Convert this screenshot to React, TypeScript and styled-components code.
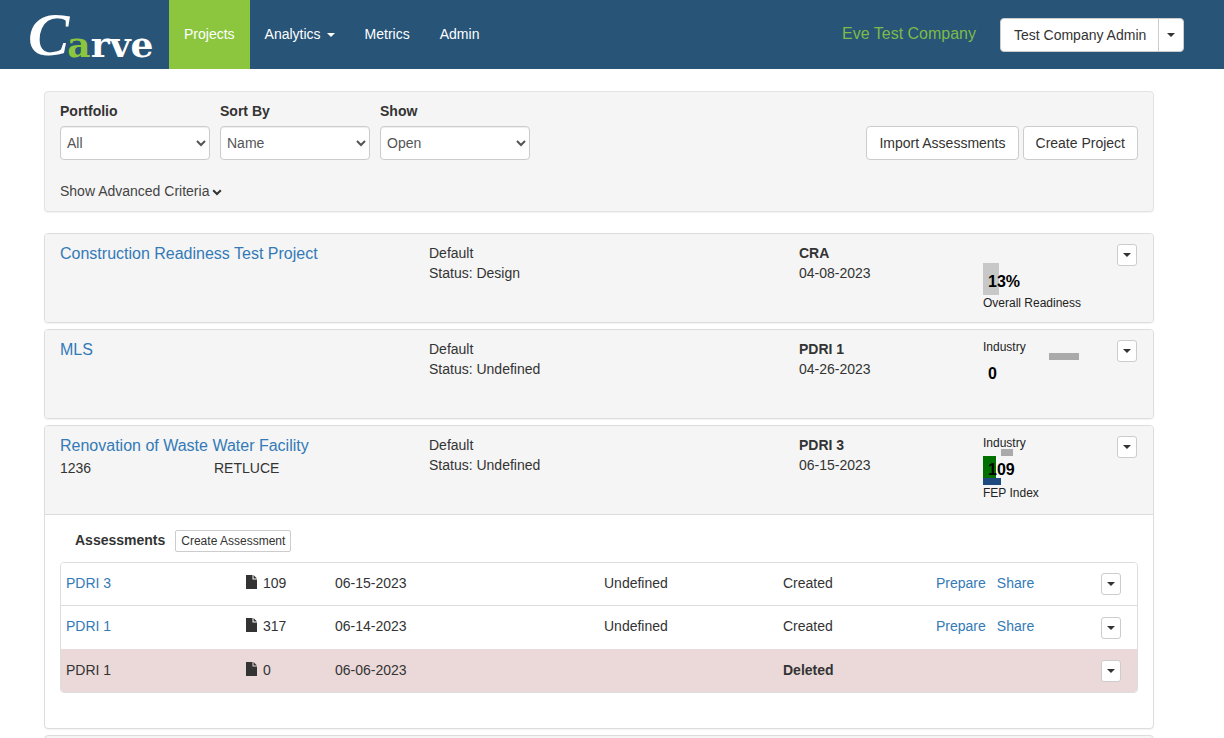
import React from 'react';
import styled, { createGlobalStyle } from 'styled-components';

const GlobalStyle = createGlobalStyle`
  html, body {
    margin: 0;
    height: 738px;
    overflow: hidden;
    background: #fff;
  }
  body {
    font-family: 'Liberation Sans', Arial, sans-serif;
    font-size: 14px;
    line-height: 20px;
    color: #333;
  }
  * {
    box-sizing: border-box;
  }
`;

const Navbar = styled.nav`
  display: flex;
  align-items: stretch;
  height: 69px;
  background: #285478;
`;

const Brand = styled.div`
  display: flex;
  align-items: flex-end;
  width: 169px;
  padding: 0 0 4px 28px;
  font-family: 'DejaVu Serif', serif;
  font-weight: bold;
  font-size: 36px;
  line-height: 42px;
  color: #fff;
`;

const BrandInitial = styled.span`
  margin-right: -2px;
  font-family: 'Liberation Serif', serif;
  font-style: italic;
  font-weight: bold;
  font-size: 62px;
  line-height: 62px;
`;

const BrandAccent = styled.span`
  color: #8cc63f;
`;

const NavLink = styled.a<{ $active?: boolean }>`
  display: flex;
  align-items: center;
  gap: 6px;
  height: 69px;
  padding: 0 15px 2px;
  color: #fff;
  background: ${(props: { $active?: boolean }) => (props.$active ? '#8cc63f' : 'transparent')};
`;

const NavCaret = styled.span`
  width: 0;
  height: 0;
  margin-top: 2px;
  border-top: 4px solid #fff;
  border-left: 4px solid transparent;
  border-right: 4px solid transparent;
`;

const NavRight = styled.div`
  display: flex;
  align-items: center;
  margin-left: auto;
  padding-right: 40px;
`;

const CompanyName = styled.span`
  margin-right: 24px;
  padding-bottom: 1px;
  font-size: 16px;
  color: #7dbb48;
`;

const UserGroup = styled.div`
  display: flex;
  height: 34px;
  background: #fff;
  border: 1px solid #ccc;
  border-radius: 4px;
`;

const UserName = styled.span`
  display: flex;
  align-items: center;
  width: 158px;
  padding-left: 13px;
  border-right: 1px solid #ccc;
`;

const UserCaret = styled.span`
  display: flex;
  align-items: center;
  justify-content: center;
  width: 24px;
`;

const Caret = styled.span`
  display: block;
  width: 0;
  height: 0;
  border-top: 4px solid #333;
  border-left: 4px solid transparent;
  border-right: 4px solid transparent;
`;

const Content = styled.main`
  width: 1110px;
  margin-left: 44px;
  padding-top: 22px;
`;

const FilterPanel = styled.section`
  display: flex;
  justify-content: space-between;
  height: 121px;
  margin-bottom: 21px;
  padding: 9px 15px;
  background: #f5f5f5;
  border: 1px solid #e3e3e3;
  border-radius: 4px;
  box-shadow: 0 1px 1px rgba(0, 0, 0, 0.05);
`;

const FilterFields = styled.div`
  display: flex;
  flex-direction: column;
`;

const FilterRow = styled.div`
  display: flex;
  gap: 10px;
`;

const Field = styled.label`
  display: flex;
  flex-direction: column;
  gap: 5px;
  width: 150px;
  font-weight: bold;
`;

const Select = styled.select`
  height: 34px;
  padding: 6px 2px;
  font-family: inherit;
  font-size: 14px;
  color: #555;
  background: #fff;
  border: 1px solid #ccc;
  border-radius: 4px;
  box-shadow: inset 0 1px 1px rgba(0, 0, 0, 0.075);
`;

const AdvancedToggle = styled.a`
  display: flex;
  align-items: center;
  gap: 3px;
  margin-top: 21px;
  color: #444;
`;

const FilterActions = styled.div`
  display: flex;
  gap: 4px;
  padding-top: 25px;
`;

const Button = styled.button`
  height: 34px;
  padding: 0 12px;
  font-family: inherit;
  font-size: 14px;
  color: #333;
  background: #fff;
  border: 1px solid #ccc;
  border-radius: 4px;
`;

const ProjectPanel = styled.section`
  margin-bottom: 6px;
  background: #fff;
  border: 1px solid #ddd;
  border-radius: 4px;
  box-shadow: 0 1px 1px rgba(0, 0, 0, 0.05);
  overflow: hidden;
`;

const ProjectHeader = styled.header`
  display: grid;
  grid-template-columns: 369px 370px 184px 134px 1fr;
  height: 88px;
  padding: 9px 16px 0 15px;
  background: #f5f5f5;
`;

const ProjectTitle = styled.a`
  display: block;
  margin-top: 1px;
  font-size: 16px;
  color: #337ab7;
`;

const ProjectMeta = styled.div`
  display: flex;
  margin-top: 2px;
`;

const ProjectCode = styled.span`
  width: 154px;
`;

const TypeName = styled.div`
  font-weight: bold;
`;

const MetricBox = styled.div`
  position: relative;
  height: 70px;
  margin-top: 1px;
  font-size: 12px;
  color: #222;
`;

const MetricBar = styled.span<{ $x: number; $y: number; $w: number; $h: number; $color: string }>`
  position: absolute;
  left: ${(p: { $x: number }) => p.$x}px;
  top: ${(p: { $y: number }) => p.$y}px;
  width: ${(p: { $w: number }) => p.$w}px;
  height: ${(p: { $h: number }) => p.$h}px;
  background: ${(p: { $color: string }) => p.$color};
`;

const MetricValue = styled.span<{ $y: number }>`
  position: absolute;
  left: 5px;
  top: ${(p: { $y: number }) => p.$y}px;
  font-size: 16px;
  font-weight: bold;
  color: #000;
`;

const MetricLabel = styled.span<{ $y: number }>`
  position: absolute;
  left: 0;
  top: ${(p: { $y: number }) => p.$y}px;
  white-space: nowrap;
`;

const SmallCaretButton = styled.button`
  display: flex;
  align-items: center;
  justify-content: center;
  width: 20px;
  height: 22px;
  margin-top: 1px;
  padding: 0;
  background: #fff;
  border: 1px solid #ccc;
  border-radius: 3px;
`;

const RowCaretButton = styled(SmallCaretButton)`
  margin-top: 2px;
`;

const AssessmentsBody = styled.div`
  height: 214px;
  padding: 15px 15px 0;
  border-top: 1px solid #ddd;
`;

const AssessmentsTitleRow = styled.div`
  display: flex;
  align-items: center;
  gap: 10px;
  height: 22px;
  margin-bottom: 10px;
  padding-left: 15px;
`;

const AssessmentsTitle = styled.strong`
  padding-bottom: 2px;
`;

const SmallButton = styled.button`
  height: 22px;
  padding: 0 5px;
  font-family: inherit;
  font-size: 12px;
  color: #333;
  background: #fff;
  border: 1px solid #ccc;
  border-radius: 2px;
`;

const AssessmentList = styled.div`
  border: 1px solid #ddd;
  border-radius: 4px;
  overflow: hidden;
`;

const AssessmentRow = styled.div<{ $deleted?: boolean }>`
  display: grid;
  grid-template-columns: 180px 89px 269px 179px 153px 165px 1fr;
  align-items: center;
  height: 43px;
  padding: 0 16px 2px 5px;
  background: ${(p: { $deleted?: boolean }) => (p.$deleted ? '#ebd9d9' : '#fff')};
  border-top: 1px solid ${(p: { $deleted?: boolean }) => (p.$deleted ? '#ebd9d9' : '#ddd')};

  &:first-child {
    border-top: 0;
    height: 42px;
  }

  &:nth-child(2) {
    height: 44px;
    padding-bottom: 4px;
  }

  &:nth-child(2) button {
    margin-top: 4px;
  }
`;

const RowLink = styled.a`
  color: #337ab7;
`;

const Score = styled.span`
  display: flex;
  align-items: center;
  gap: 6px;
`;

const RowActions = styled.span`
  display: flex;
  gap: 11px;
`;

const NextPanelEdge = styled.div`
  height: 20px;
  background: #f5f5f5;
  border: 1px solid #ddd;
  border-radius: 4px;
`;

const FileIcon = () => (
  <svg width="11" height="14" viewBox="0 0 11 14" style={{ marginTop: -2 }}>
    <path d="M0 0H6.5V4.5H11V14H0Z M7.5 0L11 3.5H7.5Z" fill="#333" />
  </svg>
);

const Chevron = () => (
  <svg width="10" height="7" viewBox="0 0 10 7" style={{ marginTop: 2 }}>
    <path d="M1.2 1.2L5 5L8.8 1.2" fill="none" stroke="#333" strokeWidth="2" />
  </svg>
);

const assessments = [
  { name: 'PDRI 3', score: 109, date: '06-15-2023', status: 'Undefined', state: 'Created' },
  { name: 'PDRI 1', score: 317, date: '06-14-2023', status: 'Undefined', state: 'Created' },
  { name: 'PDRI 1', score: 0, date: '06-06-2023', status: '', state: 'Deleted', deleted: true },
];

const App: React.FC = () => {
  return (
    <>
      <GlobalStyle />
      <Navbar>
        <Brand>
          <BrandInitial>C</BrandInitial>
          <BrandAccent>a</BrandAccent>rve
        </Brand>
        <NavLink $active>Projects</NavLink>
        <NavLink>
          Analytics <NavCaret />
        </NavLink>
        <NavLink>Metrics</NavLink>
        <NavLink>Admin</NavLink>
        <NavRight>
          <CompanyName>Eve Test Company</CompanyName>
          <UserGroup>
            <UserName>Test Company Admin</UserName>
            <UserCaret>
              <Caret />
            </UserCaret>
          </UserGroup>
        </NavRight>
      </Navbar>

      <Content>
        {/* Filters */}
        <FilterPanel>
          <FilterFields>
            <FilterRow>
              <Field>
                Portfolio
                <Select defaultValue="All">
                  <option>All</option>
                </Select>
              </Field>
              <Field>
                Sort By
                <Select defaultValue="Name">
                  <option>Name</option>
                </Select>
              </Field>
              <Field>
                Show
                <Select defaultValue="Open">
                  <option>Open</option>
                </Select>
              </Field>
            </FilterRow>
            <AdvancedToggle>
              Show Advanced Criteria <Chevron />
            </AdvancedToggle>
          </FilterFields>
          <FilterActions>
            <Button>Import Assessments</Button>
            <Button>Create Project</Button>
          </FilterActions>
        </FilterPanel>

        {/* Projects */}
        <ProjectPanel>
          <ProjectHeader>
            <ProjectTitle>Construction Readiness Test Project</ProjectTitle>
            <div>
              Default
              <br />
              Status: Design
            </div>
            <div>
              <TypeName>CRA</TypeName>
              04-08-2023
            </div>
            <MetricBox>
              <MetricBar $x={0} $y={19} $w={16} $h={32} $color="#c8c8c8" />
              <MetricValue $y={28}>13%</MetricValue>
              <MetricLabel $y={49}>Overall Readiness</MetricLabel>
            </MetricBox>
            <SmallCaretButton>
              <Caret />
            </SmallCaretButton>
          </ProjectHeader>
        </ProjectPanel>

        <ProjectPanel>
          <ProjectHeader>
            <ProjectTitle>MLS</ProjectTitle>
            <div>
              Default
              <br />
              Status: Undefined
            </div>
            <div>
              <TypeName>PDRI 1</TypeName>
              04-26-2023
            </div>
            <MetricBox>
              <MetricLabel $y={-3}>Industry</MetricLabel>
              <MetricBar $x={66} $y={13} $w={30} $h={7} $color="#aaa" />
              <MetricValue $y={24}>0</MetricValue>
            </MetricBox>
            <SmallCaretButton>
              <Caret />
            </SmallCaretButton>
          </ProjectHeader>
        </ProjectPanel>

        <ProjectPanel>
          <ProjectHeader>
            <div>
              <ProjectTitle>Renovation of Waste Water Facility</ProjectTitle>
              <ProjectMeta>
                <ProjectCode>1236</ProjectCode>
                RETLUCE
              </ProjectMeta>
            </div>
            <div>
              Default
              <br />
              Status: Undefined
            </div>
            <div>
              <TypeName>PDRI 3</TypeName>
              06-15-2023
            </div>
            <MetricBox>
              <MetricLabel $y={-3}>Industry</MetricLabel>
              <MetricBar $x={18} $y={13} $w={12} $h={7} $color="#aaa" />
              <MetricBar $x={0} $y={20} $w={13} $h={22} $color="#007000" />
              <MetricBar $x={0} $y={42} $w={18} $h={7} $color="#1f4a80" />
              <MetricValue $y={24}>109</MetricValue>
              <MetricLabel $y={47}>FEP Index</MetricLabel>
            </MetricBox>
            <SmallCaretButton>
              <Caret />
            </SmallCaretButton>
          </ProjectHeader>

          <AssessmentsBody>
            <AssessmentsTitleRow>
              <AssessmentsTitle>Assessments</AssessmentsTitle>
              <SmallButton>Create Assessment</SmallButton>
            </AssessmentsTitleRow>
            <AssessmentList>
              {assessments.map((item) => (
                <AssessmentRow key={item.date} $deleted={item.deleted}>
                  {item.deleted ? <span>{item.name}</span> : <RowLink>{item.name}</RowLink>}
                  <Score>
                    <FileIcon /> {item.score}
                  </Score>
                  <span>{item.date}</span>
                  <span>{item.status}</span>
                  {item.deleted ? <strong>{item.state}</strong> : <span>{item.state}</span>}
                  {item.deleted ? (
                    <span />
                  ) : (
                    <RowActions>
                      <RowLink>Prepare</RowLink>
                      <RowLink>Share</RowLink>
                    </RowActions>
                  )}
                  <RowCaretButton>
                    <Caret />
                  </RowCaretButton>
                </AssessmentRow>
              ))}
            </AssessmentList>
          </AssessmentsBody>
        </ProjectPanel>

        <NextPanelEdge />
      </Content>
    </>
  );
};

export default App;
